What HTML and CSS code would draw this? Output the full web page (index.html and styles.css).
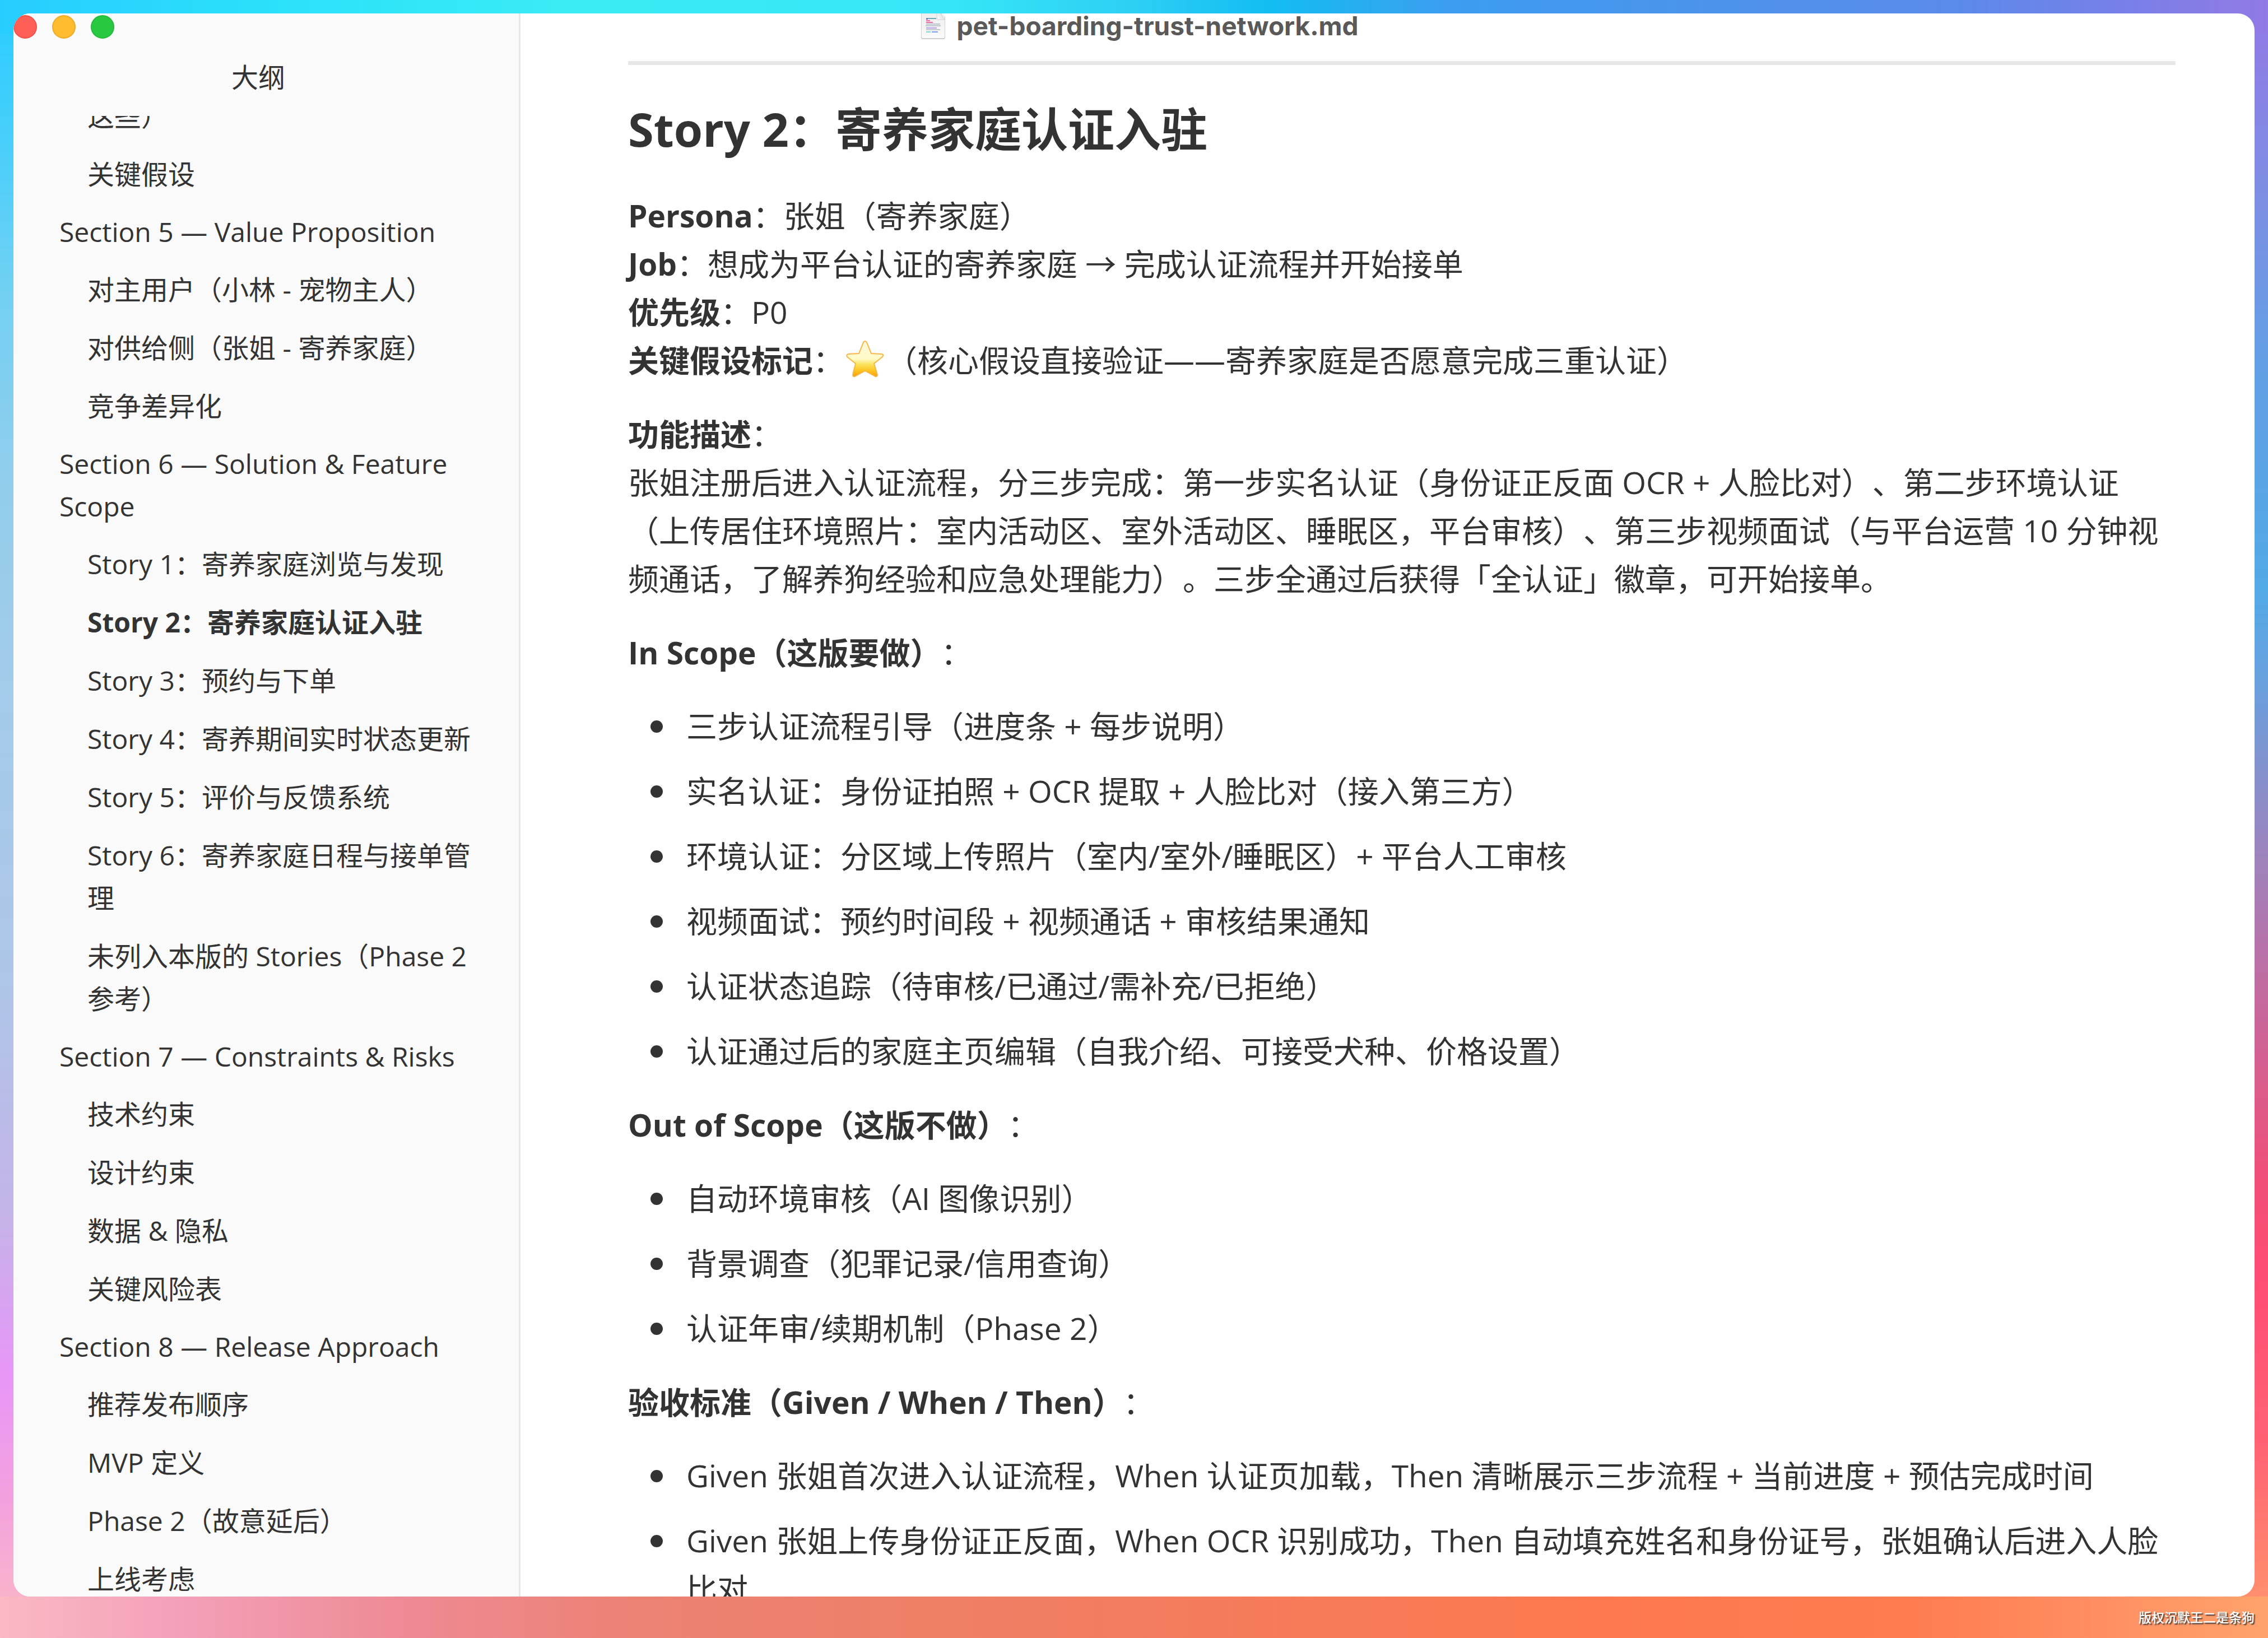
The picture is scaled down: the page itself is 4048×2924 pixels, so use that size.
FILE: index.html
```html
<!DOCTYPE html>
<html lang="zh-CN">
<head>
<meta charset="utf-8">
<title>pet-boarding-trust-network.md</title>
<link rel="stylesheet" href="styles.css">
</head>
<body>
<div class="window">
  <header class="titlebar">
    <div class="lights">
      <button class="light light-close" aria-label="关闭"></button>
      <button class="light light-min" aria-label="最小化"></button>
      <button class="light light-zoom" aria-label="缩放"></button>
    </div>
    <svg class="file-icon" viewBox="0 0 46 60" aria-hidden="true">
      <defs>
        <linearGradient id="sheet" x1="0" y1="0" x2="0" y2="1"><stop offset="0" stop-color="#ececec"/><stop offset="1" stop-color="#fafafa"/></linearGradient>
        <linearGradient id="fold" x1="0" y1="1" x2="1" y2="0"><stop offset="0" stop-color="#ffffff"/><stop offset="1" stop-color="#c9c9c9"/></linearGradient>
      </defs>
      <path d="M3 2h26l15 16v37q0 3-3 3H4q-3 0-3-3V4q0-2 2-2z" fill="#cfcfcf"/>
      <path d="M3 1h26l14 16v37q0 2-2 2H4q-2 0-2-2V3q0-2 1-2z" fill="url(#sheet)"/>
      <path d="M29 1v19q0 3 3 3h11z" fill="url(#fold)" stroke="#d2d2d2" stroke-width="1"/>
      <g stroke-width="2" fill="none">
        <path d="M10 21h18" stroke="#6aa9b5"/><path d="M10 22h3" stroke="#7a5bd0"/>
        <path d="M10 25h7M10 28h12" stroke="#f06aa6"/>
        <path d="M10 31h25M9 34h27" stroke="#b9c3cb"/>
        <path d="M10 38h19" stroke="#b79be6"/><path d="M10 41h25" stroke="#b9c9c9"/>
        <path d="M10 45h8" stroke="#7fd6cf"/><path d="M20 45h11" stroke="#7f9df0"/>
      </g>
    </svg>
    <span class="file-name">pet-boarding-trust-network.md</span>
  </header>

  <aside class="sidebar">
    <h2 class="sidebar-title">大纲</h2>
    <nav class="outline-view">
      <ul class="outline">
        <li class="sub"><a href="#">这些）</a></li>
        <li class="sub"><a href="#">关键假设</a></li>
        <li class="section"><a href="#">Section 5 — Value Proposition</a></li>
        <li class="sub"><a href="#">对主用户（小林 - 宠物主人）</a></li>
        <li class="sub"><a href="#">对供给侧（张姐 - 寄养家庭）</a></li>
        <li class="sub"><a href="#">竞争差异化</a></li>
        <li class="section"><a href="#">Section 6 — Solution &amp; Feature Scope</a></li>
        <li class="sub"><a href="#">Story 1：寄养家庭浏览与发现</a></li>
        <li class="sub current"><a href="#story-2">Story 2：寄养家庭认证入驻</a></li>
        <li class="sub"><a href="#">Story 3：预约与下单</a></li>
        <li class="sub"><a href="#">Story 4：寄养期间实时状态更新</a></li>
        <li class="sub"><a href="#">Story 5：评价与反馈系统</a></li>
        <li class="sub"><a href="#">Story 6：寄养家庭日程与接单管理</a></li>
        <li class="sub"><a href="#">未列入本版的 Stories（Phase 2 参考）</a></li>
        <li class="section"><a href="#">Section 7 — Constraints &amp; Risks</a></li>
        <li class="sub"><a href="#">技术约束</a></li>
        <li class="sub"><a href="#">设计约束</a></li>
        <li class="sub"><a href="#">数据 &amp; 隐私</a></li>
        <li class="sub"><a href="#">关键风险表</a></li>
        <li class="section"><a href="#">Section 8 — Release Approach</a></li>
        <li class="sub"><a href="#">推荐发布顺序</a></li>
        <li class="sub"><a href="#">MVP 定义</a></li>
        <li class="sub"><a href="#">Phase 2（故意延后）</a></li>
        <li class="sub"><a href="#">上线考虑</a></li>
      </ul>
    </nav>
  </aside>

  <main class="document">
    <hr>
    <h3 id="story-2">Story 2：寄养家庭认证入驻</h3>
    <p><strong>Persona</strong>：张姐（寄养家庭）<br>
      <strong>Job</strong>：想成为平台认证的寄养家庭 → 完成认证流程并开始接单<br>
      <strong>优先级</strong>：P0<br>
      <strong>关键假设标记</strong>：<svg class="star" viewBox="0 0 68 66" role="img" aria-label="星"><defs><linearGradient id="gold" x1="0" y1="0" x2="0" y2="1"><stop offset="0" stop-color="#fff6d8"/><stop offset=".5" stop-color="#fffbc8"/><stop offset=".66" stop-color="#fbe25a"/><stop offset=".85" stop-color="#fcc21c"/><stop offset="1" stop-color="#f39c12"/></linearGradient></defs><path d="M31 3q3-4 6 0l8 20 19 1q4 1 1 5L50 41l6 20q0 4-4 3L34 54 16 64q-4 1-4-3l5-20L2 29q-2-4 2-5l19-1z" fill="url(#gold)" stroke="#f7b54a" stroke-width="2" stroke-linejoin="round"/></svg>（核心假设直接验证——寄养家庭是否愿意完成三重认证）</p>
    <p><strong>功能描述</strong>：<br>
      张姐注册后进入认证流程，分三步完成：第一步实名认证（身份证正反面 OCR + 人脸比对）、第二步环境认证（上传居住环境照片：室内活动区、室外活动区、睡眠区，平台审核）、第三步视频面试（与平台运营 10 分钟视频通话，了解养狗经验和应急处理能力）。三步全通过后获得「全认证」徽章，可开始接单。</p>
    <p><strong>In Scope（这版要做）</strong>：</p>
    <ul>
      <li>三步认证流程引导（进度条 + 每步说明）</li>
      <li>实名认证：身份证拍照 + OCR 提取 + 人脸比对（接入第三方）</li>
      <li>环境认证：分区域上传照片（室内/室外/睡眠区）+ 平台人工审核</li>
      <li>视频面试：预约时间段 + 视频通话 + 审核结果通知</li>
      <li>认证状态追踪（待审核/已通过/需补充/已拒绝）</li>
      <li>认证通过后的家庭主页编辑（自我介绍、可接受犬种、价格设置）</li>
    </ul>
    <p><strong>Out of Scope（这版不做）</strong>：</p>
    <ul>
      <li>自动环境审核（AI 图像识别）</li>
      <li>背景调查（犯罪记录/信用查询）</li>
      <li>认证年审/续期机制（Phase 2）</li>
    </ul>
    <p><strong>验收标准（Given / When / Then）</strong>：</p>
    <ul>
      <li>Given 张姐首次进入认证流程，When 认证页加载，Then 清晰展示三步流程 + 当前进度 + 预估完成时间</li>
      <li>Given 张姐上传身份证正反面，When OCR 识别成功，Then 自动填充姓名和身份证号，张姐确认后进入人脸比对</li>
    </ul>
  </main>
</div>
<footer class="watermark">版权沉默王二是条狗</footer>
</body>
</html>
```
FILE: styles.css
```css
* {
  box-sizing: border-box;
}

body {
  margin: 0;
  height: 100vh;
  padding: 24px 24px 0;
  display: grid;
  grid-template-rows: minmax(0, 1fr) 74px;
  overflow: hidden;
  font-family: "Open Sans", "Noto Sans CJK SC", sans-serif;
  color: #333;
  text-spacing-trim: space-all;
  /* wallpaper: one band per side, wide enough to show behind the round corners */
  background:
    linear-gradient(90deg, #27cdff, #2be0fa 12%, #3aecf5 25%, #35e6f6 42%, #2dcff4 50%, #12bdf2 56%, #3d9df0 64%, #5a8aeb 86%, #7182e8 92%, #9279e4) top / 100% 60px no-repeat,
    linear-gradient(90deg, #fbb9c4, #f3a0b8 8%, #ee8a94 18%, #ec8274 28%, #f07e62 46%, #fd784f 70%, #ff7b50 84%, #ff8d62 92%, #ffa36c) bottom / 100% 74px no-repeat,
    linear-gradient(180deg, #27cdff, #4ecffa 10%, #72d0f2 18%, #93cdec 30%, #a3cbea 42%, #aec6e8 60%, #c4b4e8 74%, #e896f8 84%, #f3a0e0 91%, #fbb9c4) left / 60px 100% no-repeat,
    linear-gradient(180deg, #9279e4, #7d8ee4 12%, #639fe4 22%, #51a9e6 36%, #6a9fdc 42%, #9c84be 52%, #c9669a 62%, #f04f78 72%, #ff4c74 78%, #ff6273 88%, #ff9a6c) right / 60px 100% no-repeat;
}

.window {
  position: relative;
  display: grid;
  grid-template-columns: 905px minmax(0, 1fr);
  overflow: hidden;
  border-radius: 30px;
  background: #fff;
}

.titlebar {
  position: absolute;
  inset: 0 0 auto;
  height: 44px;
  padding-left: 20px;
  display: flex;
  align-items: center;
  justify-content: center;
  gap: 18px;
}

.lights {
  position: absolute;
  top: 3px;
  left: 0;
  display: flex;
  gap: 27px;
}

.light {
  width: 42px;
  height: 42px;
  padding: 0;
  border: 2px solid;
  border-radius: 50%;
}

.light-close {
  background: #ff5f57;
  border-color: #f25049;
}

.light-min {
  background: #febc2e;
  border-color: #eeab27;
}

.light-zoom {
  background: #28c840;
  border-color: #24b93a;
}

.file-icon {
  width: 46px;
  height: 60px;
  margin-bottom: 8px;
}

.file-name {
  font-family: Inter, sans-serif;
  font-size: 46px;
  font-weight: 700;
  line-height: 44px;
  color: #595959;
}

.sidebar {
  display: flex;
  flex-direction: column;
  min-height: 0;
  padding-top: 76px;
  background: #fafafa;
  border-right: 3px solid #e7e7e7;
  font-size: 48px;
  line-height: 76px;
}

.sidebar-title {
  margin: 0 0 31px;
  padding-right: 28px;
  font-size: inherit;
  font-weight: 400;
  text-align: center;
}

.outline-view {
  flex: 1;
  min-height: 0;
  overflow: hidden;
}

.outline {
  margin: -52px 0 0;
  padding: 0 56px 0 82px;
  list-style: none;
}

.outline a {
  display: block;
  color: inherit;
  text-decoration: none;
}

.section {
  padding: 13px 0;
}

.sub {
  padding: 14px 0 14px 50px;
}

.current {
  font-weight: 700;
}

.document {
  min-height: 0;
  overflow: hidden;
  padding: 85px 141px 0 192px;
  font-size: 55px;
  line-height: 86px;
}

.document hr {
  height: 7px;
  margin: 0 0 58px;
  border: 0;
  background: #e7e7e7;
}

.document h3 {
  margin: 0 0 56px;
  font-size: 83px;
  line-height: 112px;
}

.document p {
  margin: 0 0 46px;
}

.document ul {
  margin: 0 0 46px;
  padding-left: 104px;
  list-style: none;
}

.document p:has(+ ul) {
  margin-bottom: 45px;
}

.document li {
  position: relative;
}

.document li + li {
  margin-top: 30px;
}

.document li::before {
  content: "";
  position: absolute;
  top: 33px;
  left: -64px;
  width: 22px;
  height: 22px;
  border-radius: 50%;
  background: #333;
}

.star {
  width: 68px;
  height: 66px;
  margin: 0 4px;
  vertical-align: -10px;
}

.watermark {
  align-self: center;
  text-align: right;
  font-size: 23px;
  font-weight: 500;
  line-height: 28px;
  color: #fff;
  text-shadow: 2px 2px 2px #333;
}
```
